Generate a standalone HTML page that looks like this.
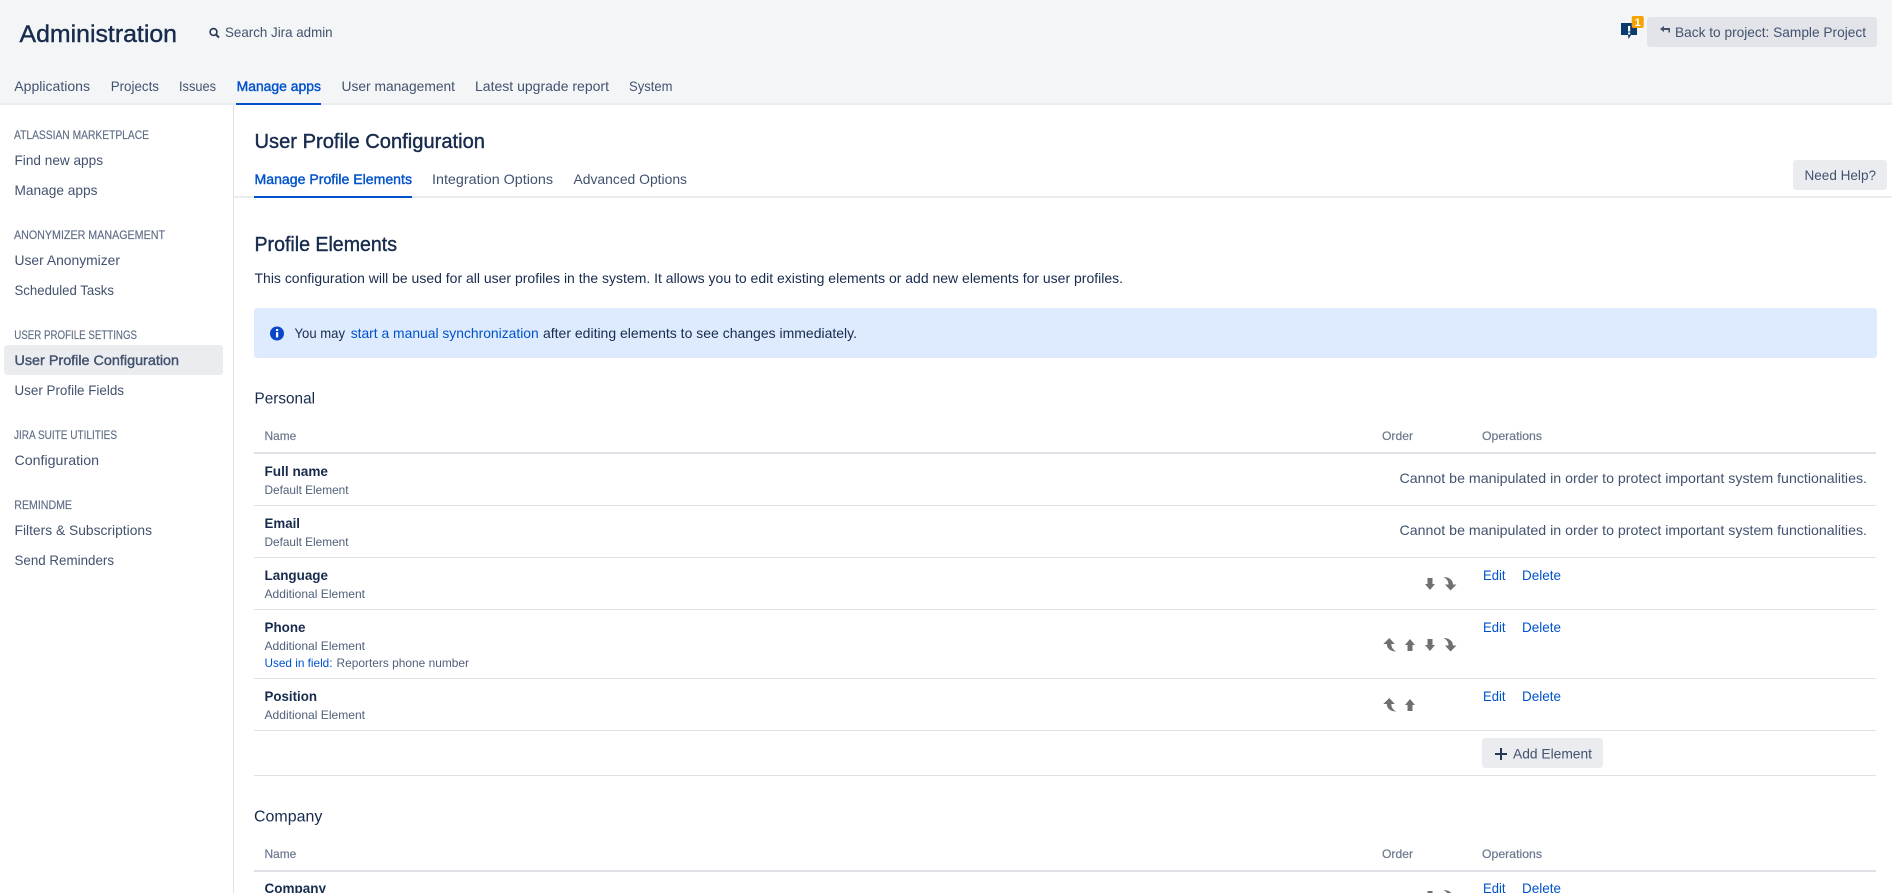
<!DOCTYPE html>
<html lang="en">
<head>
<meta charset="utf-8">
<title>User Profile Configuration</title>
<style>
html,body{margin:0;padding:0;background:#fff;width:1892px;height:893px;overflow:hidden}
svg{display:block}
text{font-family:"Liberation Sans",Arial,sans-serif;font-size:14px;fill:#42526e;white-space:pre}
.m{stroke:currentColor;stroke-width:.4}
.h{fill:#172b4d;color:#172b4d}
.l{fill:#0052cc;color:#0052cc}
.g{font-size:12px;fill:#5e6c84;color:#5e6c84;stroke:currentColor;stroke-width:.15}
.s{font-size:12px;fill:#505f79}
.b{font-weight:bold;fill:#172b4d}
.th{font-size:12px;fill:#6b778c;color:#6b778c;stroke:currentColor;stroke-width:.2}
.a{fill:#707070}
</style>
</head>
<body>
<svg width="1892" height="893" viewBox="0 0 1892 893" xmlns="http://www.w3.org/2000/svg">
<defs>
<path id="up" class="a" d="M5,0 L10,6 H7.5 V12 H2.5 V6 H0 Z"/>
<path id="dn" class="a" d="M5,12 L10,6 H7.5 V0 H2.5 V6 H0 Z"/>
<path id="cdn" class="a" d="M0,0 C5.5,0 9.5,3 9.5,7.5 L13,7.5 L7,13.5 L1.5,7.5 L5,7.5 C5,4 3,1.5 0,0 Z"/>
<path id="cup" class="a" d="M13,13.5 C7.5,13.5 3.5,10.5 3.5,6 L0,6 L6,0 L11.5,6 L8,6 C8,9.5 10,12 13,13.5 Z"/>
</defs>

<!-- header -->
<rect x="0" y="0" width="1892" height="103" fill="#f4f5f7"/>
<rect x="0" y="103" width="1892" height="2" fill="#ebecf0"/>
<text x="19.5" y="42" class="h m" style="font-size:24px" textLength="157.5" lengthAdjust="spacingAndGlyphs">Administration</text>
<circle cx="213.5" cy="32" r="3.4" fill="none" stroke="#253858" stroke-width="1.6"/>
<path d="M216,34.6 L219,37.6" stroke="#253858" stroke-width="2" fill="none"/>
<text x="225" y="37" textLength="107.6" lengthAdjust="spacingAndGlyphs">Search Jira admin</text>

<!-- notification -->
<path d="M1621,23 H1637 V35 H1631 L1628.5,39 L1628,35 H1621 Z" fill="#0b3a6f"/>
<rect x="1628" y="26" width="2.2" height="5.5" fill="#fff"/>
<rect x="1628" y="32.5" width="2.2" height="2" fill="#fff"/>
<rect x="1631.7" y="16" width="12" height="12" rx="2" fill="#f5a300"/>
<text x="1637.7" y="26" text-anchor="middle" style="font-size:11px;font-weight:bold;fill:#fff">1</text>

<!-- back button -->
<rect x="1647" y="17" width="230" height="30" rx="3" fill="#e3e4e9"/>
<path d="M1660,29 L1664,26 V28 H1670 V32.5 H1668.4 V30 H1664 V32 Z" fill="#42526e"/>
<text x="1675" y="37" textLength="191" lengthAdjust="spacingAndGlyphs">Back to project: Sample Project</text>

<!-- top nav -->
<text x="14.3" y="91" textLength="75.7" lengthAdjust="spacingAndGlyphs">Applications</text>
<text x="110.7" y="91" textLength="48.3" lengthAdjust="spacingAndGlyphs">Projects</text>
<text x="179" y="91" textLength="37" lengthAdjust="spacingAndGlyphs">Issues</text>
<text x="236.6" y="91" class="l m" textLength="84.4" lengthAdjust="spacingAndGlyphs">Manage apps</text>
<text x="341.5" y="91" textLength="113.5" lengthAdjust="spacingAndGlyphs">User management</text>
<text x="475" y="91" textLength="134" lengthAdjust="spacingAndGlyphs">Latest upgrade report</text>
<text x="629" y="91" textLength="43.5" lengthAdjust="spacingAndGlyphs">System</text>
<rect x="236" y="103" width="85" height="2" fill="#0052cc"/>

<!-- sidebar -->
<rect x="233" y="105" width="1" height="788" fill="#dfe1e6"/>
<text x="14" y="139" class="g" textLength="135" lengthAdjust="spacingAndGlyphs">ATLASSIAN MARKETPLACE</text>
<text x="14.5" y="165" textLength="88.5" lengthAdjust="spacingAndGlyphs">Find new apps</text>
<text x="14.5" y="195" textLength="83" lengthAdjust="spacingAndGlyphs">Manage apps</text>
<text x="14" y="239" class="g" textLength="151" lengthAdjust="spacingAndGlyphs">ANONYMIZER MANAGEMENT</text>
<text x="14.5" y="265" textLength="105.5" lengthAdjust="spacingAndGlyphs">User Anonymizer</text>
<text x="14.5" y="295" textLength="99.5" lengthAdjust="spacingAndGlyphs">Scheduled Tasks</text>
<text x="14.3" y="339" class="g" textLength="122.7" lengthAdjust="spacingAndGlyphs">USER PROFILE SETTINGS</text>
<rect x="4" y="345" width="219" height="30" rx="3" fill="#ebecf0"/>
<text x="14.5" y="365" class="m" style="color:#42526e" textLength="164.5" lengthAdjust="spacingAndGlyphs">User Profile Configuration</text>
<text x="14.5" y="395" textLength="109.5" lengthAdjust="spacingAndGlyphs">User Profile Fields</text>
<text x="14" y="439" class="g" textLength="103" lengthAdjust="spacingAndGlyphs">JIRA SUITE UTILITIES</text>
<text x="14.5" y="465" textLength="84.5" lengthAdjust="spacingAndGlyphs">Configuration</text>
<text x="14.3" y="509" class="g" textLength="57.7" lengthAdjust="spacingAndGlyphs">REMINDME</text>
<text x="14.5" y="535" textLength="137.5" lengthAdjust="spacingAndGlyphs">Filters &amp; Subscriptions</text>
<text x="14.5" y="565" textLength="99.5" lengthAdjust="spacingAndGlyphs">Send Reminders</text>

<!-- page header -->
<text x="254.5" y="148" class="h m" style="font-size:20px" textLength="230.5" lengthAdjust="spacingAndGlyphs">User Profile Configuration</text>
<text x="254.5" y="184" class="l m" textLength="157.5" lengthAdjust="spacingAndGlyphs">Manage Profile Elements</text>
<text x="432" y="184" textLength="121" lengthAdjust="spacingAndGlyphs">Integration Options</text>
<text x="573.5" y="184" textLength="113.5" lengthAdjust="spacingAndGlyphs">Advanced Options</text>
<rect x="234" y="196" width="1658" height="2" fill="#ebecf0"/>
<rect x="254" y="196" width="158" height="2" fill="#0052cc"/>
<rect x="1793" y="160" width="94" height="30" rx="3" fill="#ebecf0"/>
<text x="1804.5" y="180" textLength="71.5" lengthAdjust="spacingAndGlyphs">Need Help?</text>

<!-- intro -->
<text x="254.5" y="251" class="h m" style="font-size:20px" textLength="142.5" lengthAdjust="spacingAndGlyphs">Profile Elements</text>
<text x="254.5" y="283" class="h" textLength="868.5" lengthAdjust="spacingAndGlyphs">This configuration will be used for all user profiles in the system. It allows you to edit existing elements or add new elements for user profiles.</text>

<!-- info -->
<rect x="254" y="308" width="1623" height="50" rx="3" fill="#deebff"/>
<circle cx="277" cy="333.5" r="7" fill="#0747c8"/>
<rect x="276" y="329" width="2.2" height="2" fill="#fff"/>
<rect x="276" y="332.2" width="2.2" height="5.2" fill="#fff"/>
<text x="294.5" y="338" class="h" textLength="50.5" lengthAdjust="spacingAndGlyphs">You may</text>
<text x="350.7" y="338" class="l" textLength="188" lengthAdjust="spacingAndGlyphs">start a manual synchronization</text>
<text x="543" y="338" class="h" textLength="314" lengthAdjust="spacingAndGlyphs">after editing elements to see changes immediately.</text>

<!-- Personal table -->
<text x="254.5" y="403.5" class="h" style="font-size:16px" textLength="60.5" lengthAdjust="spacingAndGlyphs">Personal</text>
<text x="264.5" y="440" class="th" textLength="31.8" lengthAdjust="spacingAndGlyphs">Name</text>
<text x="1382" y="440" class="th" textLength="31" lengthAdjust="spacingAndGlyphs">Order</text>
<text x="1482" y="440" class="th" textLength="60" lengthAdjust="spacingAndGlyphs">Operations</text>
<rect x="254" y="452" width="1622" height="2" fill="#dfe1e6"/>

<text x="264.5" y="476" class="b" textLength="63.5" lengthAdjust="spacingAndGlyphs">Full name</text>
<text x="264.5" y="494" class="s" textLength="84" lengthAdjust="spacingAndGlyphs">Default Element</text>
<text x="1399.5" y="483" textLength="467.5" lengthAdjust="spacingAndGlyphs">Cannot be manipulated in order to protect important system functionalities.</text>
<rect x="254" y="505" width="1622" height="1" fill="#dfe1e6"/>

<text x="264.5" y="528" class="b" textLength="35.5" lengthAdjust="spacingAndGlyphs">Email</text>
<text x="264.5" y="546" class="s" textLength="84" lengthAdjust="spacingAndGlyphs">Default Element</text>
<text x="1399.5" y="535" textLength="467.5" lengthAdjust="spacingAndGlyphs">Cannot be manipulated in order to protect important system functionalities.</text>
<rect x="254" y="557" width="1622" height="1" fill="#dfe1e6"/>

<text x="264.5" y="580" class="b" textLength="63.5" lengthAdjust="spacingAndGlyphs">Language</text>
<text x="264.5" y="598" class="s" textLength="100.5" lengthAdjust="spacingAndGlyphs">Additional Element</text>
<use href="#dn" x="1425" y="578"/>
<use href="#cdn" x="1443.5" y="577"/>
<text x="1483" y="580" class="l" textLength="22.5" lengthAdjust="spacingAndGlyphs">Edit</text>
<text x="1522" y="580" class="l" textLength="39" lengthAdjust="spacingAndGlyphs">Delete</text>
<rect x="254" y="609" width="1622" height="1" fill="#dfe1e6"/>

<text x="264.5" y="632" class="b" textLength="41" lengthAdjust="spacingAndGlyphs">Phone</text>
<text x="264.5" y="650" class="s" textLength="100.5" lengthAdjust="spacingAndGlyphs">Additional Element</text>
<text x="264.5" y="667" class="s" style="fill:#0052cc" textLength="68" lengthAdjust="spacingAndGlyphs">Used in field:</text>
<text x="336.5" y="667" class="s" textLength="132.5" lengthAdjust="spacingAndGlyphs">Reporters phone number</text>
<use href="#cup" x="1383.3" y="638"/>
<use href="#up" x="1405" y="639"/>
<use href="#dn" x="1425" y="639"/>
<use href="#cdn" x="1443.5" y="638"/>
<text x="1483" y="632" class="l" textLength="22.5" lengthAdjust="spacingAndGlyphs">Edit</text>
<text x="1522" y="632" class="l" textLength="39" lengthAdjust="spacingAndGlyphs">Delete</text>
<rect x="254" y="678" width="1622" height="1" fill="#dfe1e6"/>

<text x="264.5" y="701" class="b" textLength="52.5" lengthAdjust="spacingAndGlyphs">Position</text>
<text x="264.5" y="719" class="s" textLength="100.5" lengthAdjust="spacingAndGlyphs">Additional Element</text>
<use href="#cup" x="1383.3" y="698"/>
<use href="#up" x="1405" y="699"/>
<text x="1483" y="701" class="l" textLength="22.5" lengthAdjust="spacingAndGlyphs">Edit</text>
<text x="1522" y="701" class="l" textLength="39" lengthAdjust="spacingAndGlyphs">Delete</text>
<rect x="254" y="730" width="1622" height="1" fill="#dfe1e6"/>

<rect x="1482" y="738" width="121" height="30" rx="3" fill="#ebecf0"/>
<path d="M1495,754 H1507 M1501,748 V760" stroke="#253858" stroke-width="2" fill="none"/>
<text x="1513" y="758.5" textLength="79" lengthAdjust="spacingAndGlyphs">Add Element</text>
<rect x="254" y="775" width="1622" height="1" fill="#dfe1e6"/>

<!-- Company table -->
<text x="254" y="821.5" class="h" style="font-size:16px" textLength="68.3" lengthAdjust="spacingAndGlyphs">Company</text>
<text x="264.5" y="858" class="th" textLength="31.8" lengthAdjust="spacingAndGlyphs">Name</text>
<text x="1382" y="858" class="th" textLength="31" lengthAdjust="spacingAndGlyphs">Order</text>
<text x="1482" y="858" class="th" textLength="60" lengthAdjust="spacingAndGlyphs">Operations</text>
<rect x="254" y="870" width="1622" height="2" fill="#dfe1e6"/>
<text x="264.5" y="893" class="b" textLength="61.5" lengthAdjust="spacingAndGlyphs">Company</text>
<use href="#dn" x="1425" y="891"/>
<use href="#cdn" x="1443.5" y="890"/>
<text x="1483" y="893" class="l" textLength="22.5" lengthAdjust="spacingAndGlyphs">Edit</text>
<text x="1522" y="893" class="l" textLength="39" lengthAdjust="spacingAndGlyphs">Delete</text>
</svg>
</body>
</html>
